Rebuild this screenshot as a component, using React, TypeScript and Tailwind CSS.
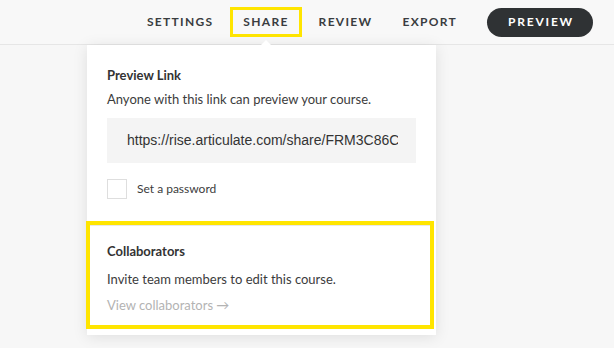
import React from "react";

const navItems = ["SETTINGS", "SHARE", "REVIEW", "EXPORT"];

export default function App() {
  return (
    <div
      className="relative h-[348px] w-[614px] overflow-hidden bg-[#f7f7f7]"
      style={{ fontFamily: "Lato, 'Open Sans', sans-serif" }}
    >
      {/* top bar */}
      <header className="flex h-[45px] items-center justify-end border-b border-[#e6e6e6] bg-[#f8f8f8] pr-[21px]">
        <nav className="flex items-center gap-[30px]">
          {navItems.map((item) =>
            item === "SHARE" ? (
              <span
                key={item}
                className="-mx-[13px] flex h-[30px] items-center border-[3px] border-[#ffe500] px-[10px] text-[12px] font-bold tracking-[1.3px] text-[#3a3d40]"
              >
                {item}
              </span>
            ) : (
              <span key={item} className="text-[12px] font-bold tracking-[1.3px] text-[#3a3d40]">
                {item}
              </span>
            )
          )}
          <button className="flex h-[29px] w-[106px] items-center justify-center rounded-full bg-[#2f3234] pl-[2px] text-[12px] font-bold tracking-[1.8px] text-white">
            PREVIEW
          </button>
        </nav>
      </header>

      {/* share popover */}
      <div className="absolute left-[87px] top-[45px] w-[349px] bg-white shadow-[0_2px_14px_rgba(0,0,0,0.10)]">
        <div className="absolute -top-[5px] left-[173px] h-0 w-0 border-x-[6px] border-b-[6px] border-x-transparent border-b-white" />
        <div className="px-[20px] pb-[22px] pt-[20px]">
          <h3 className="text-[13px] font-bold leading-[20px] text-[#333]">Preview Link</h3>
          <p className="mt-[4px] text-[13px] leading-[20px] text-[#3c3c3c]">
            Anyone with this link can preview your course.
          </p>
          <div className="mt-[9px] flex h-[45px] items-center bg-[#f4f4f4] pl-[20px] pr-[18px]">
            <div
              className="overflow-hidden whitespace-nowrap text-[14px] text-[#333]"
              style={{ fontFamily: "'Liberation Sans', Arial, sans-serif" }}
            >
              https://rise.articulate.com/share/FRM3C86C
            </div>
          </div>
          <label className="mt-[16px] flex items-center gap-[10px]">
            <span className="h-[20px] w-[20px] border border-[#dedede] bg-white" />
            <span className="text-[12px] text-[#3c3c3c]">Set a password</span>
          </label>
        </div>
        <section className="-ml-px mr-[2px] border-[4px] border-[#ffe500] px-[17px] pb-[10px] pt-[16px]">
          <div className="-mx-[17px] -mt-[16px] mb-[15px] border-t border-[#e8e8e8]" />
          <h3 className="text-[13px] font-bold leading-[20px] text-[#333]">Collaborators</h3>
          <p className="mt-[8px] text-[13px] leading-[20px] text-[#3c3c3c]">
            Invite team members to edit this course.
          </p>
          <a className="mt-[6px] block text-[13px] leading-[20px] text-[#b3b3b3]">
            View collaborators →
          </a>
        </section>
        <div className="h-[6px]" />
      </div>
    </div>
  );
}
